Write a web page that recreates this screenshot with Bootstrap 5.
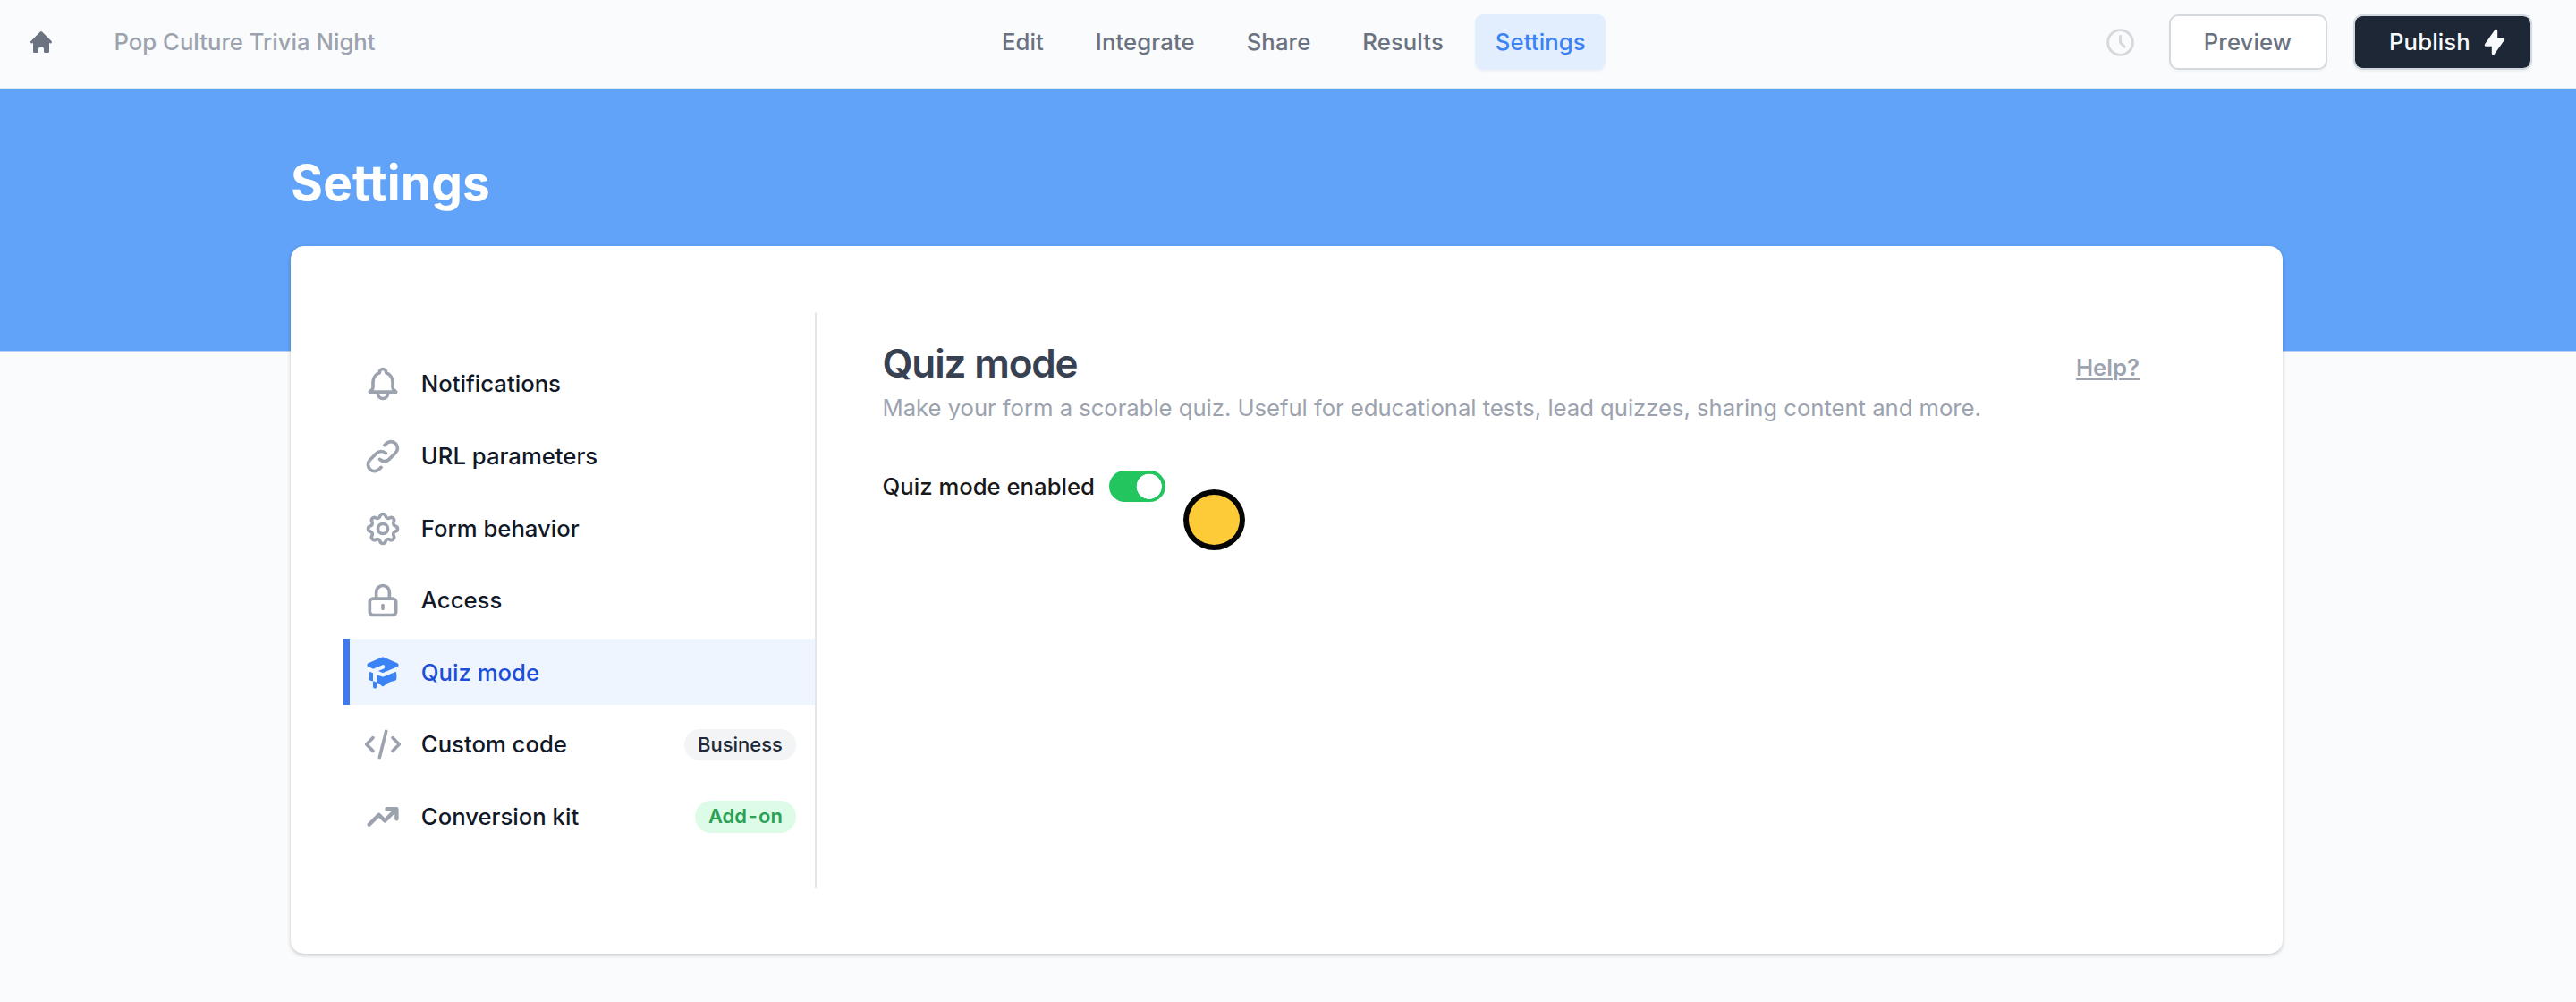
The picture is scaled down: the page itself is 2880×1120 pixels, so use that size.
<!DOCTYPE html>
<html lang="en">
<head>
<meta charset="utf-8">
<meta name="viewport" content="width=device-width, initial-scale=1">
<title>Pop Culture Trivia Night – Settings</title>
<link href="https://cdn.jsdelivr.net/npm/bootstrap@5.3.0/dist/css/bootstrap.min.css" rel="stylesheet">
<style>
  body { font-family: Inter, sans-serif; font-size: 25.7px; line-height: 1.4; font-weight: 500; background: #fafbfc; color: #111827; min-height: 1120px; overflow: hidden; }
  svg { display: block; flex: none; }
  .topbar { height: 99px; background: #fafbfd; --bs-navbar-padding-y: 0; padding-bottom: 5px; box-shadow: inset 0 -1px 0 #dfe9f8; }
  .brand-side { width: 1097.5px; padding-left: 31px; gap: 66.5px; color: #9ca3af; }
  .home-link { color: #6b7280; }
  .topnav { gap: 13.2px; --bs-nav-pills-border-radius: 9px; --bs-nav-pills-link-active-bg: #e2eefe; --bs-nav-pills-link-active-color: #3b82f6; }
  .topnav .nav-link { font-weight: 500; font-size: 25.7px; line-height: 36px; letter-spacing: .1px; padding: 13px 22.4px; color: #6b7280; }
  .topnav .nav-link.active { box-shadow: 0 2px 3px rgba(30, 60, 110, .05); }
  .actions { padding-right: 49px; }
  .clock { color: #d5d8dc; margin-right: 36px; }
  .btn-top { font-size: 25.7px; font-weight: 500; line-height: 36px; letter-spacing: .12px; border-radius: 10px; border-width: 2px; height: 62px; display: flex; align-items: center; }
  .btn-preview { width: 177px; margin-right: 29.5px; justify-content: center; color: #6b7280; background: #fff; border-color: #d5d8dd; box-shadow: 0 2px 3px rgba(0,0,0,.04); }
  .btn-publish { width: 200px; padding: 0 0 0 38px; gap: 11px; color: #f8fafc; background: #1d2735; border-color: #d3d7df; background-clip: padding-box; box-shadow: 0 2px 3px rgba(0,0,0,.05); }
  .band { background: linear-gradient(#60a3f8, #60a3f8) no-repeat 0 0 / 100% 293.5px; padding: 72px 328px 54px 325px; }
  .page-title { font-size: 55px; line-height: 66px; font-weight: 700; letter-spacing: .15px; color: #fff; margin: 0 0 38px; }
  .settings-card { border: 0; border-radius: 15px; background: #fff; height: 791px; padding: 73.5px 160px 73px 59px; box-shadow: 0 2px 4px rgba(0,0,0,.17), 0 1px 6px rgba(0,0,0,.04); }
  .side { width: 529px; padding: 43px 0; border-right: 2px solid #e5e6e9; gap: 7.15px; --bs-nav-link-color: #111827; }
  .side .nav-link { height: 73.5px; padding: 2px 21.5px 0 14.5px; border-left: 7px solid transparent; border-radius: 0; display: flex; align-items: center; color: #111827; font-weight: 500; }
  .side .nav-link svg { color: #9ca3af; margin-right: 21.3px; }
  .side .nav-link.active { background: #eef5fe; border-left-color: #4079ee; color: #1d4ed8; }
  .side .nav-link.active svg { color: #3b82f6; }
  .tag { margin-left: auto; font-size: 22px; font-weight: 500; line-height: 35.6px; height: 35.6px; padding: 0 14.6px; border-radius: 18px; }
  .tag-gray { background: #f3f4f6; color: #1f2937; }
  .tag-green { background: #dcfce7; color: #2ba055; font-weight: 600; }
  .tag-green span { margin: 0 1.4px; }
  .panel { padding-left: 73.5px; padding-top: 30.3px; }
  .panel-title { font-size: 44px; line-height: 55px; font-weight: 600; letter-spacing: -1.15px; color: #374151; margin: 0; }
  .panel-text { font-weight: 400; line-height: 43.2px; color: #9ca3af; margin: 0 0 48.5px; letter-spacing: -.04px; white-space: nowrap; }
  .help { font-weight: 600; line-height: 36px; color: #9ca3af; margin-top: 14px; text-decoration-thickness: 2px; text-underline-offset: 3px; }
  .help:hover { color: #6b7280; }
  .quiz-switch { gap: 16px; padding: 0; margin: 0; min-height: 36px; color: #18181b; }
  .quiz-switch .form-check-input { float: none; margin: 0; width: 63px; height: 35.5px; border: 0; border-radius: 18px; order: 2; background-color: #22c55e; background-image: radial-gradient(circle 14.4px at center, #fff 13.8px, transparent 14.4px); background-size: 35.5px 35.5px; background-position: right 0 center; }
  .pointer { position: absolute; left: 1323px; top: 547px; width: 69px; height: 68px; border-radius: 50%; border: 6px solid #050505; background: #fdcb37; }
</style>
</head>
<body>
<header class="navbar topbar flex-nowrap">
  <div class="brand-side d-flex align-items-center">
    <a class="home-link" href="#" aria-label="Home"><svg width="30" height="30" viewBox="0 0 20 20" fill="currentColor"><path d="M10.707 2.293a1 1 0 00-1.414 0l-7 7a1 1 0 001.414 1.414L4 10.414V17a1 1 0 001 1h2a1 1 0 001-1v-2a1 1 0 011-1h2a1 1 0 011 1v2a1 1 0 001 1h2a1 1 0 001-1v-6.586l.293.293a1 1 0 001.414-1.414l-7-7z"/></svg></a>
    <span>Pop Culture Trivia Night</span>
  </div>
  <nav class="nav nav-pills topnav flex-nowrap">
    <a class="nav-link" href="#">Edit</a>
    <a class="nav-link" href="#">Integrate</a>
    <a class="nav-link" href="#">Share</a>
    <a class="nav-link" href="#">Results</a>
    <a class="nav-link active" href="#">Settings</a>
  </nav>
  <div class="actions d-flex align-items-center ms-auto">
    <svg class="clock" width="37" height="37" viewBox="0 0 24 24" fill="none" stroke="currentColor" stroke-width="1.9" stroke-linecap="round" stroke-linejoin="round"><path d="M12 7.5V12l3 3m6-3a9 9 0 11-18 0 9 9 0 0118 0z"/></svg>
    <button class="btn btn-top btn-preview" type="button">Preview</button>
    <button class="btn btn-top btn-publish" type="button">Publish
      <svg width="32" height="32" viewBox="0 0 20 20" fill="currentColor"><path d="M11.3 1.046A1 1 0 0112 2v5h4a1 1 0 01.82 1.573l-7 10A1 1 0 018 18v-5H4a1 1 0 01-.82-1.573l7-10a1 1 0 011.12-.38z"/></svg>
    </button>
  </div>
</header>
<main class="band">
  <h1 class="page-title">Settings</h1>
  <div class="card settings-card flex-row">
    <nav class="nav flex-column flex-nowrap side flex-shrink-0">
      <a class="nav-link" href="#"><svg width="44" height="44" viewBox="0 0 24 24" fill="none" stroke="currentColor" stroke-width="2" stroke-linecap="round" stroke-linejoin="round"><path d="M15 17h5l-1.405-1.405A2.032 2.032 0 0118 14.158V11a6.002 6.002 0 00-4-5.659V5a2 2 0 10-4 0v.341C7.67 6.165 6 8.388 6 11v3.159c0 .538-.214 1.055-.595 1.436L4 17h5m6 0v1a3 3 0 11-6 0v-1m6 0H9"/></svg>Notifications</a>
      <a class="nav-link" href="#"><svg width="44" height="44" viewBox="0 0 24 24" fill="none" stroke="currentColor" stroke-width="2" stroke-linecap="round" stroke-linejoin="round"><path d="M13.828 10.172a4 4 0 00-5.656 0l-4 4a4 4 0 105.656 5.656l1.102-1.101m-.758-4.899a4 4 0 005.656 0l4-4a4 4 0 00-5.656-5.656l-1.1 1.1"/></svg>URL parameters</a>
      <a class="nav-link" href="#"><svg width="44" height="44" viewBox="0 0 24 24" fill="none" stroke="currentColor" stroke-width="2" stroke-linecap="round" stroke-linejoin="round"><path d="M10.325 4.317c.426-1.756 2.924-1.756 3.35 0a1.724 1.724 0 002.573 1.066c1.543-.94 3.31.826 2.37 2.37a1.724 1.724 0 001.065 2.572c1.756.426 1.756 2.924 0 3.35a1.724 1.724 0 00-1.066 2.573c.94 1.543-.826 3.31-2.37 2.37a1.724 1.724 0 00-2.572 1.065c-.426 1.756-2.924 1.756-3.35 0a1.724 1.724 0 00-2.573-1.066c-1.543.94-3.31-.826-2.37-2.37a1.724 1.724 0 00-1.065-2.572c-1.756-.426-1.756-2.924 0-3.35a1.724 1.724 0 001.066-2.573c-.94-1.543.826-3.31 2.37-2.37.996.608 2.296.07 2.572-1.065z"/><path d="M15 12a3 3 0 11-6 0 3 3 0 016 0z"/></svg>Form behavior</a>
      <a class="nav-link" href="#"><svg width="44" height="44" viewBox="0 0 24 24" fill="none" stroke="currentColor" stroke-width="2" stroke-linecap="round" stroke-linejoin="round"><path d="M12 15v2m-6 4h12a2 2 0 002-2v-6a2 2 0 00-2-2H6a2 2 0 00-2 2v6a2 2 0 002 2zm10-10V7a4 4 0 00-8 0v4h8z"/></svg>Access</a>
      <a class="nav-link active" href="#"><svg width="44" height="44" viewBox="0 0 20 20" fill="currentColor"><path d="M10.394 2.08a1 1 0 00-.788 0l-7 3a1 1 0 000 1.84L5.25 8.051a.999.999 0 01.356-.257l4-1.714a1 1 0 11.788 1.838L7.667 9.088l1.94.831a1 1 0 00.787 0l7-3a1 1 0 000-1.838l-7-3zM3.31 9.397L5 10.12v4.102a8.969 8.969 0 00-1.05-.174 1 1 0 01-.89-.89 11.115 11.115 0 01.25-3.762zM9.3 16.573A9.026 9.026 0 007 14.935v-3.957l1.818.78a3 3 0 002.364 0l5.508-2.361a11.026 11.026 0 01.25 3.762 1 1 0 01-.89.89 8.968 8.968 0 00-5.35 2.524 1 1 0 01-1.4 0zM6 18a1 1 0 001-1v-2.065a8.935 8.935 0 00-2-.712V17a1 1 0 001 1z"/></svg>Quiz mode</a>
      <a class="nav-link" href="#"><svg width="44" height="44" viewBox="0 0 24 24" fill="none" stroke="currentColor" stroke-width="2" stroke-linecap="round" stroke-linejoin="round"><path d="M10 20l4-16m4 4l4 4-4 4M6 16l-4-4 4-4"/></svg>Custom code<span class="tag tag-gray">Business</span></a>
      <a class="nav-link" href="#"><svg width="44" height="44" viewBox="0 0 20 20" fill="currentColor"><path d="M12 7a1 1 0 110-2h5a1 1 0 011 1v5a1 1 0 11-2 0V8.414l-4.293 4.293a1 1 0 01-1.414 0L8 10.414l-4.293 4.293a1 1 0 01-1.414-1.414l5-5a1 1 0 011.414 0L11 10.586 14.586 7H12z"/></svg>Conversion kit<span class="tag tag-green">Add<span>-</span>on</span></a>
    </nav>
    <section class="panel flex-grow-1">
      <div class="d-flex justify-content-between align-items-start">
        <div>
          <h2 class="panel-title">Quiz mode</h2>
          <p class="panel-text">Make your form a scorable quiz. Useful for educational tests, lead quizzes, sharing content and more.</p>
        </div>
        <a class="help" href="#">Help?</a>
      </div>
      <div class="form-check form-switch quiz-switch d-flex align-items-center">
        <label class="form-check-label" for="quizMode">Quiz mode enabled</label>
        <input class="form-check-input" type="checkbox" role="switch" id="quizMode" checked>
      </div>
    </section>
  </div>
</main>
<div class="pointer"></div>
<script src="https://cdn.jsdelivr.net/npm/bootstrap@5.3.0/dist/js/bootstrap.bundle.min.js"></script>
</body>
</html>
